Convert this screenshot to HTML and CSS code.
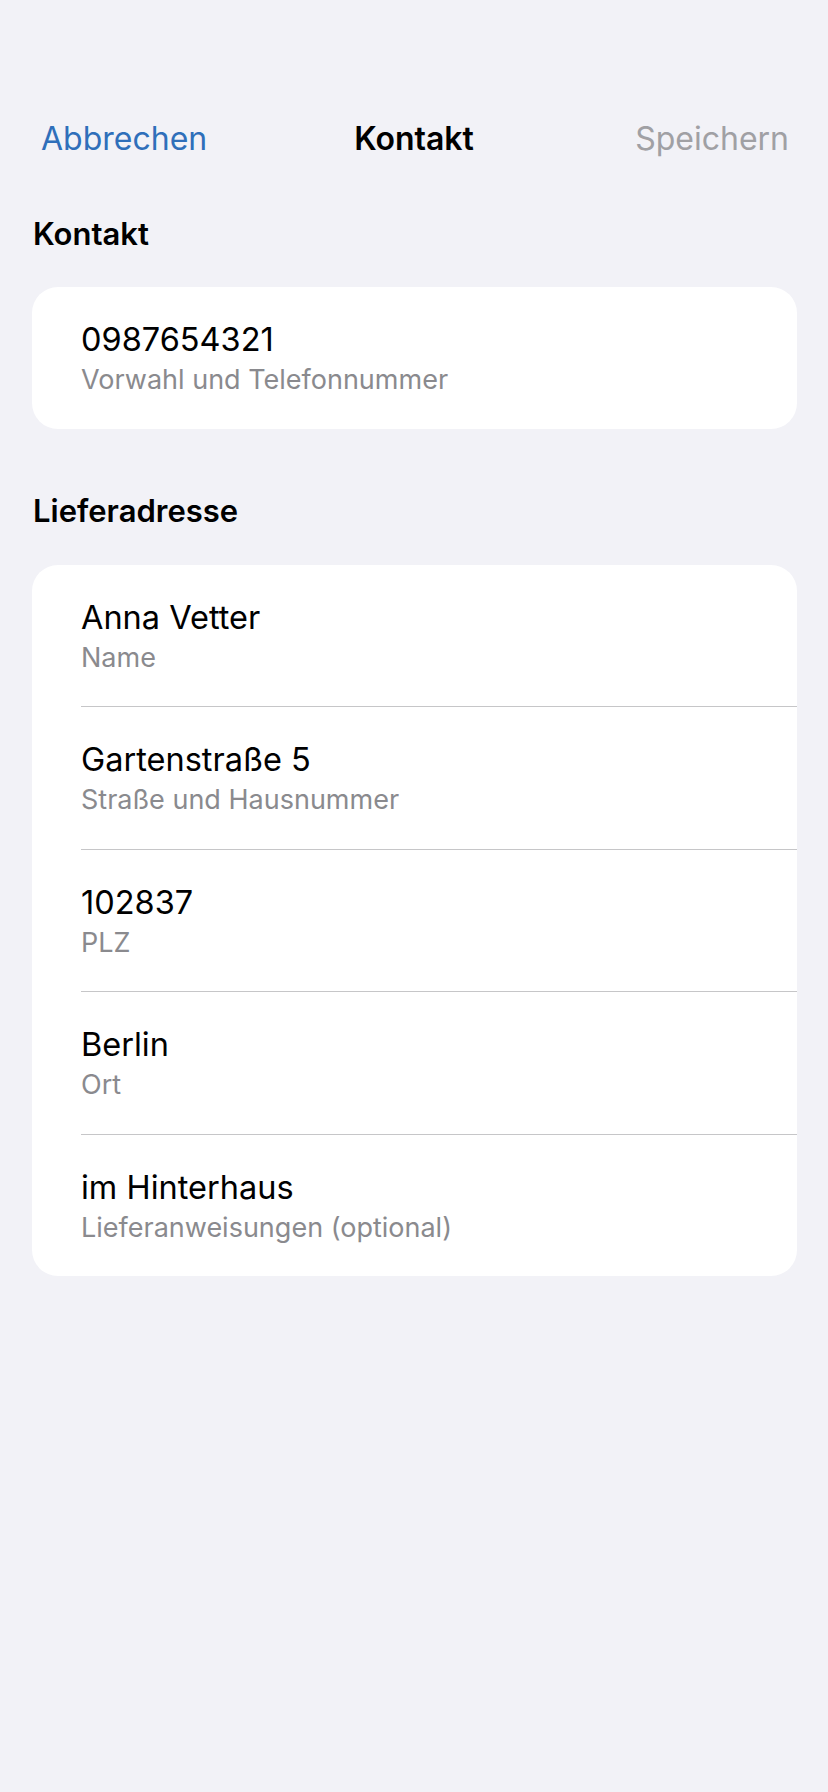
FILE: index.html
```html
<!DOCTYPE html>
<html lang="de">
<head>
<meta charset="utf-8">
<title>Kontakt</title>
<link rel="stylesheet" href="styles.css">
</head>
<body>
<div class="screen">
  <header class="nav">
    <span class="nav-btn nav-cancel">Abbrechen</span>
    <span class="nav-title">Kontakt</span>
    <span class="nav-btn nav-save">Speichern</span>
  </header>

  <main class="content">
    <h2 class="section-title">Kontakt</h2>
    <section class="card">
      <div class="row">
        <div class="row-inner">
          <div class="value">0987654321</div>
          <div class="label">Vorwahl und Telefonnummer</div>
        </div>
      </div>
    </section>

    <h2 class="section-title section-gap">Lieferadresse</h2>
    <section class="card">
      <div class="row">
        <div class="row-inner">
          <div class="value">Anna Vetter</div>
          <div class="label">Name</div>
        </div>
      </div>
      <div class="row">
        <div class="row-inner">
          <div class="value">Gartenstraße 5</div>
          <div class="label">Straße und Hausnummer</div>
        </div>
      </div>
      <div class="row">
        <div class="row-inner">
          <div class="value">102837</div>
          <div class="label">PLZ</div>
        </div>
      </div>
      <div class="row">
        <div class="row-inner">
          <div class="value">Berlin</div>
          <div class="label">Ort</div>
        </div>
      </div>
      <div class="row">
        <div class="row-inner">
          <div class="value">im Hinterhaus</div>
          <div class="label">Lieferanweisungen (optional)</div>
        </div>
      </div>
    </section>
  </main>
</div>
</body>
</html>
```

FILE: styles.css
```css
* {
  box-sizing: border-box;
}

html, body {
  margin: 0;
  padding: 0;
  background: #f2f2f7;
}

body {
  font-family: "Inter", "Noto Sans", "Liberation Sans", sans-serif;
  color: #000;
  -webkit-font-smoothing: antialiased;
}

.screen {
  width: 828px;
  height: 1792px;
  padding-top: 96px;
  background: #f2f2f7;
  overflow: hidden;
}

.nav {
  height: 86px;
  display: flex;
  align-items: center;
  justify-content: space-between;
  padding: 0 39px 0 41px;
  position: relative;
}

.nav-btn {
  font-size: 32px;
  line-height: 40px;
}

.nav-cancel {
  color: #2f6fba;
}

.nav-save {
  color: #a0a0a4;
}

.nav-title {
  font-size: 32px;
  line-height: 40px;
  font-weight: 600;
  position: absolute;
  left: 0;
  right: 0;
  text-align: center;
  pointer-events: none;
}

.content {
  padding: 0 31px 0 32px;
}

.section-title {
  margin: 32px 0 33px 1px;
  font-size: 31px;
  line-height: 40px;
  font-weight: 600;
}

.section-gap {
  margin-top: 62px;
  margin-bottom: 34px;
}

.card {
  background: #fff;
  border-radius: 26px;
  overflow: hidden;
}

.row {
  padding-left: 49px;
}

.row-inner {
  padding: 33px 0 31.5px 0;
  border-bottom: 1px solid #c6c6c8;
}

.row:last-child .row-inner {
  border-bottom: none;
}

.value {
  font-size: 32.5px;
  line-height: 40px;
  color: #000;
}

.label {
  margin-top: 3px;
  font-size: 27px;
  line-height: 34px;
  color: #8a8a8e;
}
```
